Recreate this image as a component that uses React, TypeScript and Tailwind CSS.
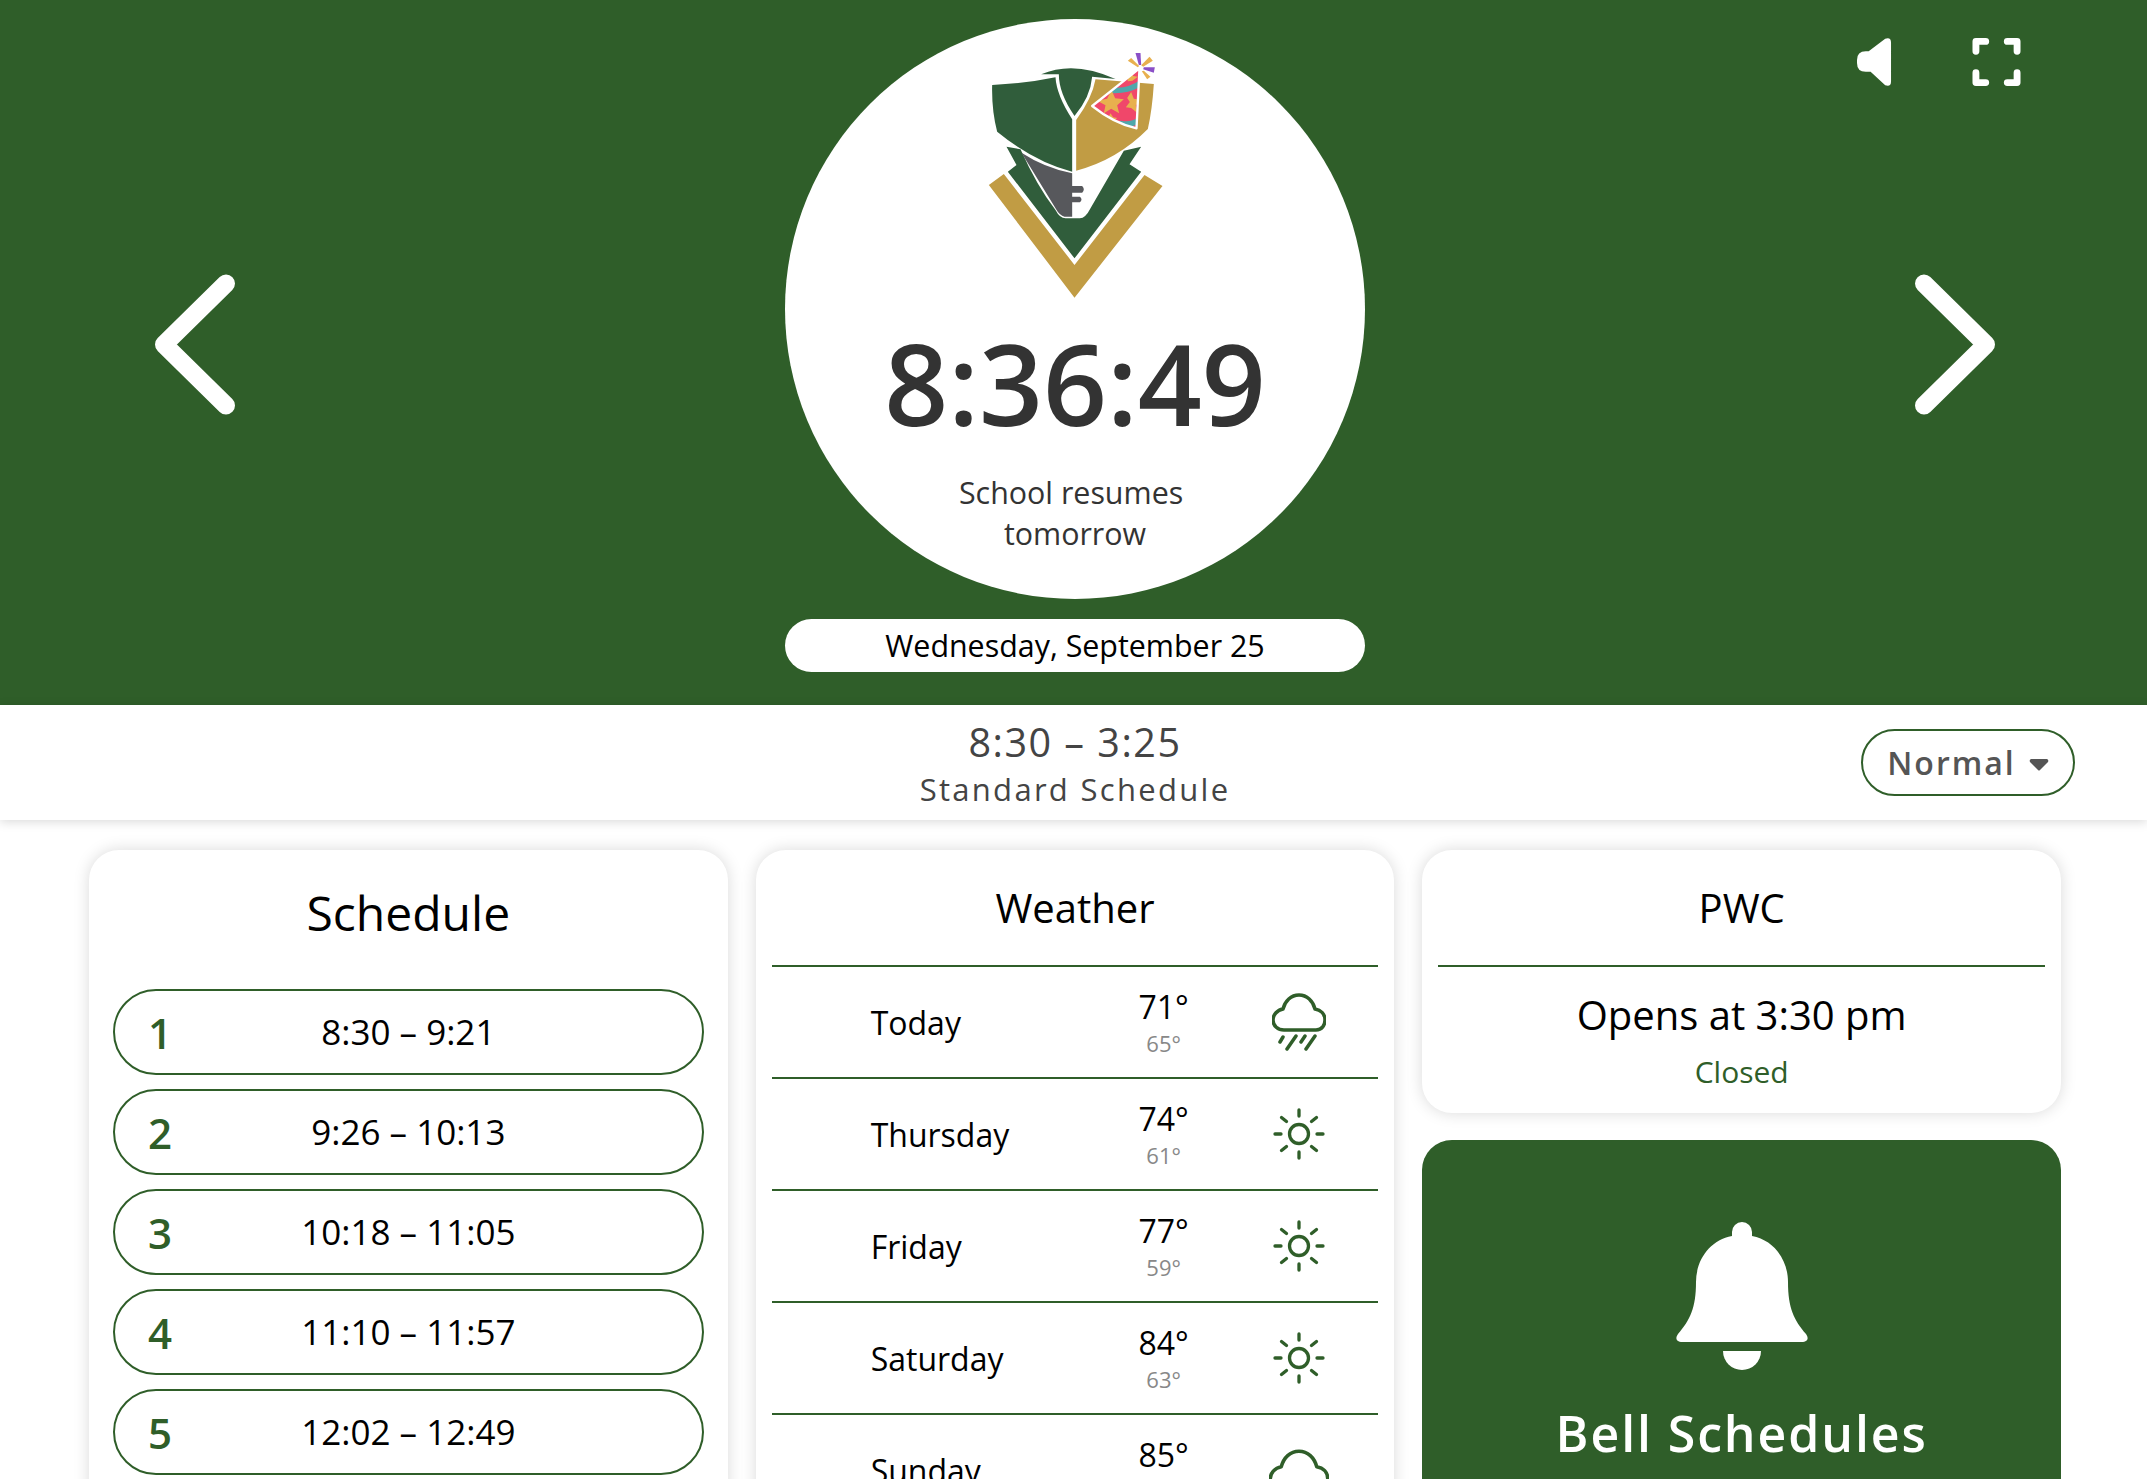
const periods = [
  { n: 1, time: "8:30 – 9:21" },
  { n: 2, time: "9:26 – 10:13" },
  { n: 3, time: "10:18 – 11:05" },
  { n: 4, time: "11:10 – 11:57" },
  { n: 5, time: "12:02 – 12:49" },
];

const forecast = [
  { day: "Today", hi: 71, lo: 65, icon: "rain" },
  { day: "Thursday", hi: 74, lo: 61, icon: "sun" },
  { day: "Friday", hi: 77, lo: 59, icon: "sun" },
  { day: "Saturday", hi: 84, lo: 63, icon: "sun" },
  { day: "Sunday", hi: 85, lo: 64, icon: "cloud" },
];

const Logo = () => (
  <svg viewBox="200 60 530 750" className="h-[250px] w-[177px] shrink-0">
    <defs>
      <clipPath id="hat">
        <path d="M657 115 L515 228 Q580 280 648 295 Z" />
      </clipPath>
    </defs>
    <polygon points="205,465 250,432 462,705 672,435 726,468 462,803" fill="#c19c44" />
    <path
      d="M258 350 L300 358 Q350 470 405 540 Q418 565 435 565 L478 565 Q495 565 510 535 L610 362 L662 350 L627 403 L662 425 L462 685 L262 425 L288 405 Z"
      fill="#305d3b"
    />
    <path
      d="M303 368 Q370 412 455 430 L455 468 L485 468 Q495 478 485 488 L455 488 L455 500 L478 500 Q488 508 478 517 L455 517 L455 560 L432 560 Q418 558 405 535 Z"
      fill="#57585c"
    />
    <path d="M215 165 Q320 160 405 142 Q408 195 455 268 L455 425 Q340 395 230 305 Q213 240 215 165 Z" fill="#305d3b" />
    <path d="M362 133 Q460 90 585 147 L515 140 Q510 200 462 258 Q415 190 415 133 Z" fill="#305d3b" />
    <path d="M525 148 L700 162 Q695 240 682 297 Q590 390 467 422 L467 270 Q515 205 525 148 Z" fill="#c19c44" />
    <path d="M657 115 L515 228 Q580 280 648 295 Z" fill="#f0476a" />
    <g clipPath="url(#hat)">
      <path d="M575 172 Q620 178 660 150 L660 170 Q615 195 560 188 Z" fill="#4fa7ab" />
      <path d="M600 272 Q630 278 655 262 L655 282 Q625 296 590 286 Z" fill="#4fa7ab" />
      <polygon points="573,180 584,205 610,208 590,226 596,250 572,236 550,250 555,226 530,212 560,206" fill="#e8b04e" />
      <polygon points="632,186 640,206 662,210 646,226 650,248 632,234 616,232 628,216 620,204" fill="#e8b04e" />
      <polygon points="570,250 578,262 590,264 578,274 560,268" fill="#e8b04e" />
      <polygon points="630,122 638,138 652,140 636,152 622,154 620,140" fill="#e8b04e" />
    </g>
    <path d="M657 115 L515 228 Q580 280 648 295 Z" fill="none" stroke="#fff" strokeWidth="7" strokeLinejoin="round" />
    <path d="M645 69 L660 69 L662 105 L655 105 Z" fill="#8a4fc7" />
    <path d="M703 112 L700 128 L668 118 L670 112 Z" fill="#8a4fc7" />
    <path d="M622 92 L632 84 L656 108 L652 112 Z" fill="#e8b04e" />
    <path d="M687 80 L697 92 L668 110 L662 106 Z" fill="#e8b04e" />
    <path d="M670 122 L690 140 L680 148 L664 124 Z" fill="#e8b04e" />
  </svg>
);

const Sun = () => (
  <svg viewBox="0 0 52 52" fill="none" stroke="#2f5e29" strokeWidth="3.3" strokeLinecap="round" className="h-[52px] w-[52px]">
    <circle cx="26" cy="26" r="9.5" />
    <path d="M26 2 V8 M26 44 V50 M2 26 H8 M44 26 H50 M8.5 9.5 L13.5 13.5 M43.5 9.5 L38.5 13.5 M8.5 42.5 L13.5 38.5 M43.5 42.5 L38.5 38.5" />
  </svg>
);

const RainCloud = () => (
  <svg viewBox="0 0 54 58" fill="none" stroke="#2f5e29" strokeWidth="3.5" strokeLinecap="round" strokeLinejoin="round" className="h-[58px] w-[54px]">
    <path d="M12 37 H44 C50 37 53 32 53 27 C53 21 49 17 43 16 C41 8 35 2 27 2 C19 2 13 8 11 16 C5 17 1 22 1 27 C1 33 6 37 12 37 Z" />
    <path d="M11 44 L8 49 M24 43 L15 56 M33 43 L29 49 M43 43 L34 56" />
  </svg>
);

const Cloud = () => (
  <svg viewBox="0 0 54 38" fill="none" stroke="#2f5e29" strokeWidth="3.2" strokeLinecap="round" strokeLinejoin="round" className="h-[42px] w-[60px]">
    <path d="M12 37 H44 C50 37 53 32 53 27 C53 21 49 17 43 16 C41 8 35 2 27 2 C19 2 13 8 11 16 C5 17 1 22 1 27 C1 33 6 37 12 37 Z" />
  </svg>
);

const App = () => {
  return (
    <div className="relative h-screen overflow-hidden bg-white font-['Open_Sans',sans-serif] text-black">
      <header className="relative flex h-[705px] items-start justify-between bg-[#2f5e29] pt-[19px] pr-[152px] pl-[155px]">
        <svg viewBox="0 0 80 141" fill="none" stroke="#fff" strokeWidth="18" strokeLinecap="round" strokeLinejoin="round" className="mt-[255px] h-[141px] w-[80px]">
          <path d="M71 9.5 L9 70.5 L71 131.5" />
        </svg>
        <div className="flex w-[580px] flex-col items-center">
          <div className="flex h-[580px] w-[580px] flex-col items-center rounded-full bg-white pt-[31px]">
            <Logo />
            <div className="mt-[23px] text-[112px] leading-[120px] font-semibold text-[#333]">8:36:49</div>
            <div className="mt-[29px] w-[280px] text-center text-[30.4px] leading-[41px] text-[#333]">School resumes&nbsp; tomorrow</div>
          </div>
          <div className="mt-[20px] flex h-[53px] w-full items-center justify-center rounded-full bg-white text-[30.4px]">
            Wednesday, September 25
          </div>
        </div>
        <svg viewBox="0 0 80 141" fill="none" stroke="#fff" strokeWidth="18" strokeLinecap="round" strokeLinejoin="round" className="mt-[255px] h-[141px] w-[80px]">
          <path d="M9 9.5 L71 70.5 L9 131.5" />
        </svg>
        <div className="absolute top-[37px] right-[126px] flex items-center gap-[80px]">
          <svg viewBox="0 0 36 50" className="h-[50px] w-[35px]" fill="#fff">
            <path d="M12 14 L29 1 Q35 -1 35 5 L35 45 Q35 51 29 49 L14 35 L9 35 Q0 35 0 26 L0 23 Q0 14 9 14 Z" />
          </svg>
          <svg viewBox="0 0 50 50" className="h-[50px] w-[49px]" fill="none" stroke="#fff" strokeWidth="7" strokeLinecap="round" strokeLinejoin="round">
            <path d="M4 14 V4 H14 M36 4 H46 V14 M4 36 V46 H14 M36 46 H46 V36" />
          </svg>
        </div>
      </header>

      <div className="relative flex h-[115px] flex-col items-center justify-center bg-white pt-[1px] pl-[3px] shadow-[0_2px_10px_rgba(0,0,0,0.15)]">
        <div className="text-[39.5px] leading-[50px] tracking-[1.5px] text-[#444]">8:30 – 3:25</div>
        <div className="pt-[1px] text-[31px] leading-[42px] tracking-[2.3px] text-[#444]">Standard Schedule</div>
        <div className="absolute top-[24px] right-[72px] flex h-[67px] w-[214px] items-center justify-center gap-[13px] rounded-full border-2 border-[#2f5e29] text-[32px] font-semibold tracking-[2px] text-[#555]">
          Normal
          <svg viewBox="0 0 20 12" className="mt-[4px] h-[12px] w-[20px]" fill="#555">
            <path d="M2 0 H18 Q20 1 19 3 L11 11 Q10 12 9 11 L1 3 Q0 1 2 0 Z" />
          </svg>
        </div>
      </div>

      <main className="grid grid-cols-3 items-start gap-[28px] pt-[30px] pr-[86px] pl-[89px]">
        <section className="rounded-[30px] bg-white px-[24px] pb-[40px] shadow-[0_0_16px_rgba(0,0,0,0.15)]">
          <h2 className="flex h-[139px] items-center justify-center pb-[13px] text-[48px]">Schedule</h2>
          <div className="flex flex-col gap-[14px]">
            {periods.map((p) => (
              <div key={p.n} className="relative flex h-[86px] items-center justify-center rounded-full border-2 border-[#2f5e29] pt-[1px] text-[35px]">
                <span className="absolute left-[33px] text-[42px] font-semibold text-[#2f5e29]">{p.n}</span>
                {p.time}
              </div>
            ))}
          </div>
        </section>

        <section className="rounded-[30px] bg-white px-[16px] shadow-[0_0_16px_rgba(0,0,0,0.15)]">
          <h2 className="flex h-[115px] items-center justify-center text-[40px]">Weather</h2>
          {forecast.map((f) => (
            <div key={f.day} className="grid h-[112px] grid-cols-[334px_116px_1fr] items-center border-t-2 border-[#2f5e29]">
              <span className="pt-[2px] pl-[99px] text-[32px]">{f.day}</span>
              <div className="text-center">
                <div className="text-[32px] leading-[40px]">{f.hi}°</div>
                <div className="mt-[2px] text-[22px] leading-[28px] text-[#888]">{f.lo}°</div>
              </div>
              <div className="flex justify-center pr-[1px]">
                {f.icon === "sun" ? <Sun /> : f.icon === "rain" ? <RainCloud /> : <Cloud />}
              </div>
            </div>
          ))}
        </section>

        <div className="flex flex-col gap-[27px]">
          <section className="rounded-[30px] bg-white px-[16px] shadow-[0_0_16px_rgba(0,0,0,0.15)]">
            <h2 className="flex h-[115px] items-center justify-center text-[40px]">PWC</h2>
            <div className="flex h-[148px] flex-col items-center border-t-2 border-[#2f5e29] pt-[21px]">
              <div className="text-[40px] leading-[54px]">Opens at 3:30 pm</div>
              <div className="mt-[10px] text-[30px] leading-[40px] text-[#2f5e29]">Closed</div>
            </div>
          </section>
          <section className="flex h-[400px] flex-col items-center rounded-[30px] bg-[#2f5e29] pt-[80px] text-white">
            <svg viewBox="0 0 132 150" className="h-[150px] w-[132px]" fill="#fff">
              <path d="M56 16 V12 A10 10 0 0 1 76 12 V16 C98 20 112 40 112 62 C112 88 118 100 130 114 C134 120 130 122 124 122 H8 C2 122 -2 120 2 114 C14 100 20 88 20 62 C20 40 34 20 56 16 Z" />
              <path d="M47 131 H85 A19 19 0 0 1 47 131 Z" />
            </svg>
            <div className="mt-[26px] text-[50px] font-semibold tracking-[1.9px]">Bell Schedules</div>
          </section>
        </div>
      </main>
    </div>
  );
};

export default App;
